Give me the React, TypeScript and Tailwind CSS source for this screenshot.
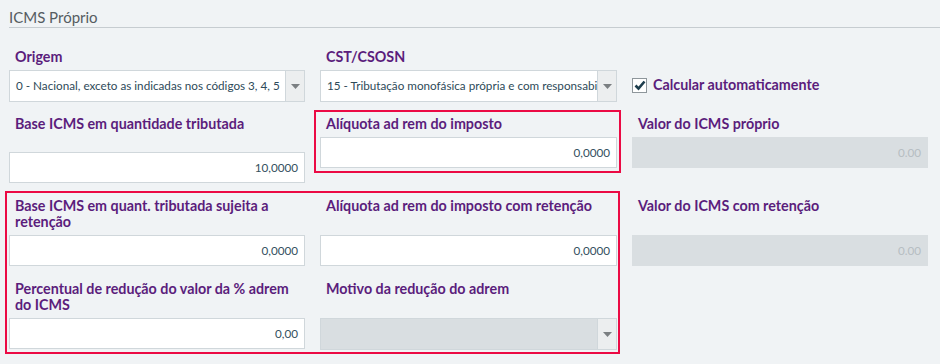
import React from 'react'

const label = 'pl-[6px] text-[14.3px] leading-[16px] font-bold text-[#5b1d7c]'
const inputBox = 'h-[31px] bg-white border border-[#d0d7db] flex items-center justify-end pr-[6px] text-[11.7px] text-[#34505e]'
const disabledBox = 'h-[31px] bg-[#d9dee1] flex items-center justify-end pr-[7px] text-[11.7px] text-[#b6bdc2]'

function Caret() {
  return (
    <svg width="9" height="5" viewBox="0 0 9 5">
      <path d="M0 0 L9 0 L4.5 5 Z" fill="#7b7f82" />
    </svg>
  )
}

function Select({ value, disabled }: { value?: string, disabled?: boolean }) {
  return (
    <div className={`h-[32px] flex border border-[#d0d7db] ${disabled ? 'bg-[#d9dee1]' : 'bg-white'}`}>
      <div className="flex-1 min-w-0 overflow-hidden whitespace-nowrap pl-[6px] flex items-center text-[11.7px] text-[#2e4a59]">
        {value}
      </div>
      <div className="w-[19px] border-l border-[#d0d7db] bg-[#eceeef] flex items-center justify-center">
        <Caret />
      </div>
    </div>
  )
}

function Field({ title, children, tall }: { title: React.ReactNode, children: React.ReactNode, tall?: boolean }) {
  return (
    <div className="flex flex-col gap-[5px]">
      <div className={`${label} ${tall ? 'min-h-[32px]' : ''}`}>{title}</div>
      {children}
    </div>
  )
}

export default function App() {
  return (
    <div className="relative w-[940px] h-[364px] overflow-hidden bg-[#f0f3f5]" style={{ fontFamily: 'Lato, "Noto Sans", sans-serif' }}>
      <div className="ml-[9px] h-[28px] border-b border-[#c6ccd0] pt-[7px] text-[15px] leading-[20px] text-[#555c61]">
        ICMS Próprio
      </div>

      <div className="px-[9px] mt-[21px] grid grid-cols-[296px_297px_296px] gap-x-[15px] items-start">
        <Field title="Origem">
          <Select value="0 - Nacional, exceto as indicadas nos códigos 3, 4, 5" />
        </Field>
        <Field title="CST/CSOSN">
          <Select value="15 - Tributação monofásica própria e com responsabilidade" />
        </Field>
        <label className="mt-[28px] flex items-center gap-[6px]">
          <span className="w-[15px] h-[15px] bg-white border border-[#8e969b] flex items-center justify-center">
            <svg width="12" height="11" viewBox="0 0 12 11">
              <path d="M1.5 5.5 L4.5 8.5 L10.5 1.5" fill="none" stroke="#1d3d4d" strokeWidth="2.6" />
            </svg>
          </span>
          <span className="text-[14.3px] leading-[16px] font-bold text-[#5b1d7c]">Calcular automaticamente</span>
        </label>
      </div>

      <div className="px-[9px] mt-[14px] grid grid-cols-[296px_297px_296px] gap-x-[15px] items-start">
        <div className="flex flex-col gap-[4px]">
          <div className={`${label} min-h-[32px]`}>Base ICMS em quantidade tributada</div>
          <div className={inputBox}>10,0000</div>
        </div>
        <Field title="Alíquota ad rem do imposto">
          <div className={inputBox}>0,0000</div>
        </Field>
        <Field title="Valor do ICMS próprio">
          <div className={disabledBox}>0.00</div>
        </Field>
      </div>

      <div className="px-[9px] mt-[15px] grid grid-cols-[296px_297px_296px] gap-x-[15px] items-start">
        <Field title="Base ICMS em quant. tributada sujeita a retenção" tall>
          <div className={inputBox}>0,0000</div>
        </Field>
        <Field title="Alíquota ad rem do imposto com retenção" tall>
          <div className={inputBox}>0,0000</div>
        </Field>
        <Field title="Valor do ICMS com retenção" tall>
          <div className={disabledBox}>0.00</div>
        </Field>
      </div>

      <div className="px-[9px] mt-[15px] grid grid-cols-[296px_297px_296px] gap-x-[15px] items-start">
        <Field title="Percentual de redução do valor da % adrem do ICMS" tall>
          <div className={inputBox}>0,00</div>
        </Field>
        <Field title="Motivo da redução do adrem" tall>
          <Select disabled />
        </Field>
      </div>

      <div className="absolute left-[314px] top-[110px] w-[307px] h-[63px] border-2 border-[#eb0a44] pointer-events-none" />
      <div className="absolute left-[5px] top-[191px] w-[615px] h-[163px] border-2 border-[#eb0a44] pointer-events-none" />
    </div>
  )
}
